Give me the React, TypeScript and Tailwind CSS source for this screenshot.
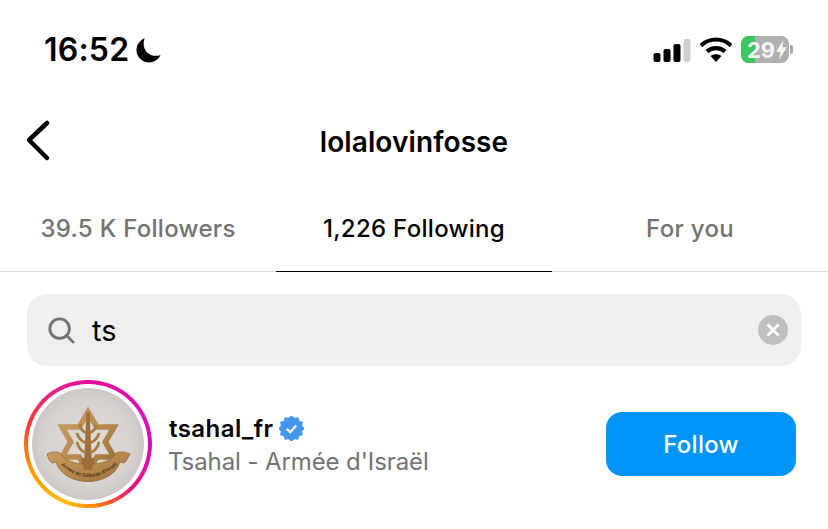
import React from "react";

function Moon() {
  return (
    <svg width="26" height="25" viewBox="3 2.500 21 21">
      <path d="M10.500 2.500C6 4 3 8 3 12.600c0 5.900 4.800 10.400 10.600 10.400 4.300 0 8-2.500 9.600-6.200-1.300.5-2.600.7-3.900.7-5.900 0-10.300-4.400-10.300-10.200 0-1.700.3-3.300 1-4.800z" fill="#000" />
    </svg>
  );
}

function Signal() {
  return (
    <svg width="38" height="24" viewBox="0 0 38 24">
      <rect x="0.500" y="15" width="7" height="9" rx="2" fill="#000" />
      <rect x="10.500" y="11" width="7" height="13" rx="2" fill="#000" />
      <rect x="20.500" y="6" width="7" height="18" rx="2" fill="#000" />
      <rect x="30.500" y="1" width="7" height="23" rx="2" fill="#cfcfcf" />
    </svg>
  );
}

function Wifi() {
  return (
    <svg width="34" height="26" viewBox="0 0 34 26">
      <path d="M2 8.500C10.500 0.500 23.500 0.500 32 8.500" stroke="#000" strokeWidth="4.200" fill="none" />
      <path d="M8 14.500C13 10 21 10 26 14.500" stroke="#000" strokeWidth="4.200" fill="none" />
      <path d="M11.500 19 17 25 22.500 19C19.500 16.500 14.500 16.500 11.500 19z" fill="#000" />
    </svg>
  );
}

function Battery() {
  return (
    <div className="flex items-center">
      <div className="relative h-[27px] w-[48px] overflow-hidden rounded-[8px] bg-[#b0b0b0]">
        <div className="h-full w-[14px] bg-[#3ec65f]" />
        <div className="absolute inset-0 flex items-center pl-[6px] text-[22px] leading-none font-bold text-[#f4f4f4]">
          <span>29</span>
          <svg width="11" height="20" viewBox="0 0 12 22" className="ml-[1px]">
            <path d="M8 0 0 13h5l-2 9 9-14H7z" fill="#f4f4f4" />
          </svg>
        </div>
      </div>
      <div className="ml-[1px] h-[9px] w-[3px] rounded-r-[2px] bg-[#a8a8a8]" />
    </div>
  );
}

function Emblem() {
  return (
    <svg width="112" height="112" viewBox="0 0 112 112">
      <defs>
        <radialGradient id="bg" cx="50%" cy="50%" r="55%">
          <stop offset="0%" stopColor="#e0dcd9" />
          <stop offset="70%" stopColor="#d6d2d0" />
          <stop offset="100%" stopColor="#c6c3c2" />
        </radialGradient>
        <linearGradient id="gold" x1="0" y1="0" x2="1" y2="1">
          <stop offset="0%" stopColor="#c99c62" />
          <stop offset="55%" stopColor="#b5874c" />
          <stop offset="100%" stopColor="#9a6d38" />
        </linearGradient>
        <path id="arc" d="M22 70Q56 108 92 70" />
      </defs>
      <circle cx="56" cy="56" r="56" fill="url(#bg)" />
      <polygon
        points="56,24 64.700,39 82,39 73.300,54 82,69 64.700,69 56,84 47.300,69 30,69 38.700,54 30,39 47.300,39"
        fill="none"
        stroke="url(#gold)"
        strokeWidth="5.500"
        strokeLinejoin="miter"
      />
      <path d="M54.500 24H57.500L60 76H52Z" fill="#9c6f39" />
      <path d="M54 45C50 43 48 40 48 36M58 45C62 43 64 40 64 37M54 55C49 53 46 49 45 45M58 55C63 53 66 49 67 45M54 65C49 63 46 59 45 54M58 65C63 63 66 59 67 54" stroke="#a87b43" strokeWidth="2.800" fill="none" />
      <path d="M15 66 C19 64 24 63 28 65 C34 80 78 80 84 65 C88 63 93 64 98 66 C96 69 95 73 92 75 L88 74 C80 100 32 100 24 74 L20 75 C17 73 16 69 15 66Z" fill="url(#gold)" stroke="#966a36" strokeWidth="0.800" />
      <path d="M49 70H63L60 82H52Z" fill="#9c6f39" />
      <text fontSize="5" fontWeight="700" fill="#4a3418" style={{ fontFamily: '"Liberation Sans", sans-serif' }}>
        <textPath href="#arc" startOffset="12%">Armée de Défense d'Israël</textPath>
      </text>
    </svg>
  );
}

function Verified() {
  const pts: string[] = [];
  for (let i = 0; i < 24; i++) {
    const r = i % 2 ? 10 : 12;
    const a = (i * Math.PI) / 12;
    pts.push(`${12 + r * Math.sin(a)},${12 - r * Math.cos(a)}`);
  }
  return (
    <svg width="25" height="25" viewBox="0 0 24 24">
      <polygon points={pts.join(" ")} fill="#4395ed" stroke="#4395ed" strokeWidth="1" strokeLinejoin="round" />
      <path d="M7.500 12.300 10.800 15.500 16.500 9.200" stroke="#fff" strokeWidth="2.200" fill="none" />
    </svg>
  );
}

export default function App() {
  return (
    <div className="h-[529px] w-[828px] overflow-hidden bg-white text-black" style={{ fontFamily: 'Inter, "Liberation Sans", sans-serif' }}>
      <div className="flex h-[100px] items-start justify-between pt-[32px] pr-[35px] pl-[44px]">
        <div className="flex items-center gap-[7px]">
          <span className="text-[32px] leading-[36px] font-semibold tracking-[0.2px]">16:52</span>
          <Moon />
        </div>
        <div className="flex items-center gap-[8px] pt-[4px]">
          <Signal />
          <Wifi />
          <Battery />
        </div>
      </div>

      <div className="relative flex h-[84px] items-center justify-center">
        <svg width="28" height="44" viewBox="0 0 28 44" className="absolute top-[19px] left-[25px]">
          <path d="M22 4 4 21 22 39" stroke="#000" strokeWidth="4.500" fill="none" strokeLinecap="round" strokeLinejoin="round" />
        </svg>
        <span className="text-[28px] leading-[34px] font-semibold tracking-[0.1px]">lolalovinfosse</span>
      </div>

      <div className="flex h-[88px] border-b border-[#dbdbdb] text-[24px] font-medium tracking-[0.3px]">
        <div className="flex w-[276px] items-center justify-center pt-[3px] text-[#737373]">39.5 K Followers</div>
        <div className="-mb-px flex w-[276px] items-center justify-center border-b border-black pt-[3px]">1,226 Following</div>
        <div className="flex w-[276px] items-center justify-center pt-[3px] text-[#737373]">For you</div>
      </div>

      <div className="px-[27px] pt-[22px]">
        <div className="flex h-[72px] items-center rounded-[20px] bg-[#efefef] pr-[13px] pl-[20px]">
          <svg width="28" height="28" viewBox="0 0 30 30">
            <circle cx="13.500" cy="13.500" r="10.500" stroke="#737373" strokeWidth="3" fill="none" />
            <path d="M21 21 28 28" stroke="#737373" strokeWidth="3" strokeLinecap="round" />
          </svg>
          <span className="ml-[17px] flex-1 text-[29px] leading-none">ts</span>
          <svg width="30" height="30" viewBox="0 0 30 30">
            <circle cx="15" cy="15" r="15" fill="#bfbfbf" />
            <path d="M9.500 9.500 20.500 20.500M20.500 9.500 9.500 20.500" stroke="#fff" strokeWidth="2.800" />
          </svg>
        </div>
      </div>

      <div className="flex items-center pt-[14px] pr-[32px] pl-[24px]">
        <div className="flex h-[128px] w-[128px] items-center justify-center rounded-full bg-[conic-gradient(#e5109a_0deg,#d80cc0_90deg,#e8107f_135deg,#ff7a10_170deg,#ffc000_200deg,#ff9a00_245deg,#f83a3a_290deg,#e8208f_330deg,#e5109a_360deg)]">
          <div className="flex h-[120px] w-[120px] items-center justify-center rounded-full bg-white">
            <Emblem />
          </div>
        </div>
        <div className="ml-[17px] flex-1 pt-[2px]">
          <div className="flex h-[32px] items-center gap-[6px]">
            <span className="text-[24px] font-semibold tracking-[0.45px]">tsahal_fr</span>
            <Verified />
          </div>
          <div className="-ml-px mt-[1px] text-[24px] leading-[32px] tracking-[-0.1px] text-[#737373]">Tsahal - Armée d'Israël</div>
        </div>
        <div className="flex h-[64px] w-[190px] items-center justify-center rounded-[16px] bg-[#0095f6] pt-[1px] text-[24px] font-medium tracking-[0.3px] text-white">Follow</div>
      </div>
    </div>
  );
}
